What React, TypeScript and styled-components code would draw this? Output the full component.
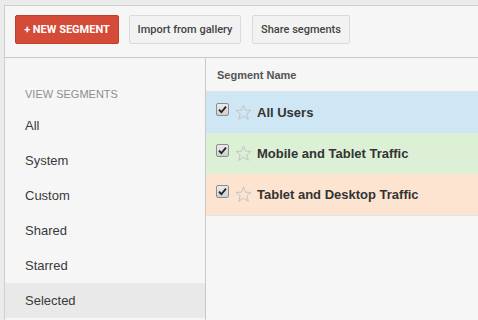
import React from "react";
import styled, { createGlobalStyle } from "styled-components";

const Global = createGlobalStyle`
  html, body { margin: 0; padding: 0; }
  body { background: #ebebeb; font-family: "Liberation Sans", Arial, sans-serif; }
  #root { width: 478px; height: 320px; overflow: hidden; }
`;

const Page = styled.div`
  width: 478px;
  height: 320px;
  box-sizing: border-box;
  padding: 5px 0 0 4px;
  background: #ebebeb;
`;

const Frame = styled.div`
  height: 100%;
  box-sizing: border-box;
  border-top: 1px solid #cfcfcf;
  border-left: 1px solid #cfcfcf;
  background: #f6f6f6;
  display: flex;
  flex-direction: column;
`;

const Toolbar = styled.div`
  height: 51px;
  flex: 0 0 auto;
  box-sizing: content-box;
  border-bottom: 1px solid #c9c9c9;
  display: flex;
  align-items: flex-start;
  padding: 9px 0 0 10px;
  box-sizing: border-box;
  height: 52px;
`;

const Button = styled.button<{ $primary?: boolean; $w: number; $ml: number }>`
  height: 29px;
  width: ${(p) => p.$w}px;
  margin-left: ${(p) => p.$ml}px;
  box-sizing: border-box;
  border-radius: 2px;
  border: 1px solid ${(p) => (p.$primary ? "#c43c2a" : "#dadada")};
  background: ${(p) => (p.$primary ? "#d44b38" : "#f2f2f2")};
  color: ${(p) => (p.$primary ? "#ffffff" : "#444444")};
  font-family: Roboto, "Liberation Sans", Arial, sans-serif;
  font-size: 11px;
  font-weight: ${(p) => (p.$primary ? 700 : 500)};
  padding: 0;
  display: flex;
  align-items: center;
  justify-content: center;
  cursor: pointer;
`;

const Body = styled.div`
  flex: 1;
  display: flex;
  min-height: 0;
`;

const Sidebar = styled.div`
  width: 200px;
  flex: 0 0 200px;
  border-right: 1px solid #c9c9c9;
  padding-top: 29px;
  box-sizing: content-box;
`;

const SideHeading = styled.div`
  padding-left: 20px;
  height: 14px;
  line-height: 14px;
  margin-bottom: 7px;
  font-size: 11px;
  color: #8e8e8e;
  text-transform: uppercase;
`;

const SideItem = styled.div<{ $active?: boolean }>`
  height: 35px;
  line-height: 35px;
  padding-left: 20px;
  font-size: 13px;
  color: #3a3a3a;
  background: ${(p) => (p.$active ? "#e9e9e9" : "transparent")};
`;

const Main = styled.div`
  flex: 1;
  display: flex;
  flex-direction: column;
`;

const Header = styled.div`
  height: 33px;
  border-bottom: 1px solid #e3e3e3;
  display: flex;
  align-items: center;
  padding-left: 11px;
  font-size: 11px;
  font-weight: 700;
  color: #555;
`;

const List = styled.div`
  border-bottom: 1px solid #e2e2e2;
`;

const Row = styled.div<{ $bg: string }>`
  height: 41px;
  background: ${(p) => p.$bg};
  display: flex;
  align-items: center;
  padding-left: 10px;
`;

const Check = styled.span`
  width: 13px;
  height: 13px;
  box-sizing: border-box;
  border: 1px solid #8d8d8d;
  border-radius: 2px;
  background: linear-gradient(#ececec, #cfcfcf);
  display: flex;
  align-items: center;
  justify-content: center;
  margin-top: -6px;
`;

const StarWrap = styled.span`
  width: 17px;
  height: 17px;
  margin-left: 6px;
  display: flex;
`;

const Name = styled.span`
  margin-left: 5px;
  font-size: 13px;
  font-weight: 700;
  color: #333;
`;

const CheckIcon = () => (
  <svg width="9" height="9" viewBox="0 0 9 9">
    <path d="M1 4.6 L3.4 7.2 L8 1.6" fill="none" stroke="#222" strokeWidth="1.8" />
  </svg>
);

const StarIcon = () => (
  <svg width="17" height="17" viewBox="0 0 17 17">
    <polygon
      points="8.5,1 10.6,6.2 16,6.4 11.8,9.8 13.3,15.3 8.5,12.2 3.7,15.3 5.2,9.8 1,6.4 6.4,6.2"
      fill="none"
      stroke="#c4c4c4"
      strokeWidth="1"
      strokeLinejoin="round"
    />
  </svg>
);

const segments = [
  { name: "All Users", bg: "#cfe6f4" },
  { name: "Mobile and Tablet Traffic", bg: "#dcf0d6" },
  { name: "Tablet and Desktop Traffic", bg: "#fde4d0" },
];

const sideItems = ["All", "System", "Custom", "Shared", "Starred", "Selected"];

export default function App() {
  return (
    <Page>
      <Global />
      <Frame>
        <Toolbar>
          <Button $primary $w={104} $ml={0}>+ NEW SEGMENT</Button>
          <Button $w={112} $ml={10}>Import from gallery</Button>
          <Button $w={98} $ml={11}>Share segments</Button>
        </Toolbar>
        <Body>
          <Sidebar>
            <SideHeading>View Segments</SideHeading>
            {sideItems.map((s) => (
              <SideItem key={s} $active={s === "Selected"}>
                {s}
              </SideItem>
            ))}
          </Sidebar>
          <Main>
            <Header>Segment Name</Header>
            <List>
              {segments.map((s) => (
                <Row key={s.name} $bg={s.bg}>
                  <Check>
                    <CheckIcon />
                  </Check>
                  <StarWrap>
                    <StarIcon />
                  </StarWrap>
                  <Name>{s.name}</Name>
                </Row>
              ))}
            </List>
          </Main>
        </Body>
      </Frame>
    </Page>
  );
}
